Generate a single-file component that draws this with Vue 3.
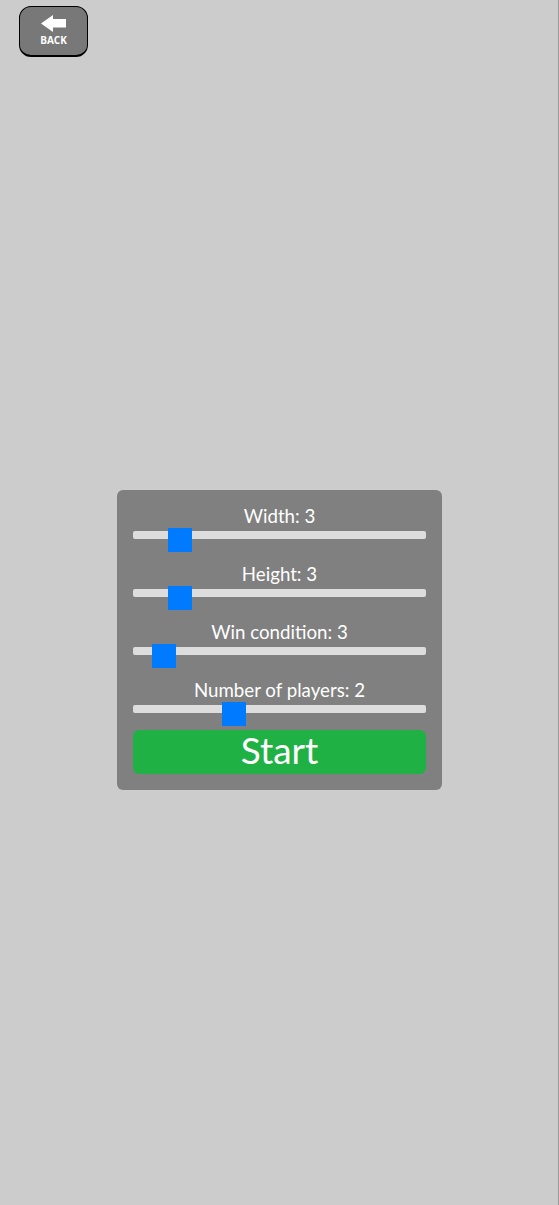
<script setup>
import { ref } from 'vue';

const width = ref(3);
const height = ref(3);
const winCondition = ref(3);
const players = ref(2);
</script>

<template>
    <div class="page">
        <header class="top">
            <button class="back-btn" type="button">
                <svg class="back-icon" viewBox="0 0 25 17" width="25" height="17">
                    <path d="M0 8.5 L12 0 V4 H25 V12.5 H12 V17 Z" fill="#fff" />
                </svg>
                <span class="back-text">BACK</span>
            </button>
        </header>
        <main class="main">
            <div class="panel">
                <div class="field">
                    <label class="label">Width: {{ width }}</label>
                    <input v-model.number="width" class="slider" type="range" min="1" max="16" />
                </div>
                <div class="field">
                    <label class="label">Height: {{ height }}</label>
                    <input v-model.number="height" class="slider" type="range" min="1" max="16" />
                </div>
                <div class="field">
                    <label class="label">Win condition: {{ winCondition }}</label>
                    <input v-model.number="winCondition" class="slider" type="range" min="2" max="16" />
                </div>
                <div class="field">
                    <label class="label">Number of players: {{ players }}</label>
                    <input v-model.number="players" class="slider" type="range" min="1" max="4" />
                </div>
                <button class="start-btn" type="button">Start</button>
            </div>
        </main>
    </div>
</template>

<style>
html,
body {
    margin: 0;
    background: #cccccc;
}
</style>

<style scoped>
.page {
    display: flex;
    flex-direction: column;
    height: 1205px;
    background: #cccccc;
    box-shadow: inset -1px 0 0 #999999;
    font-family: Lato, "Open Sans", sans-serif;
    overflow: hidden;
}

.top {
    height: 75px;
    flex: none;
    padding: 6px 0 0 19px;
    box-sizing: border-box;
}

.back-btn {
    display: flex;
    flex-direction: column;
    align-items: center;
    width: 69px;
    height: 51px;
    padding: 8px 0 0;
    box-sizing: border-box;
    background: #787878;
    border: 1px solid #000;
    border-bottom-width: 2px;
    border-radius: 12px;
    color: #fff;
    cursor: pointer;
}

.back-icon {
    display: block;
}

.back-text {
    margin-top: 2px;
    font-family: "Open Sans", sans-serif;
    font-size: 10px;
    line-height: 13px;
    font-weight: 700;
}

.main {
    flex: 1;
    display: flex;
    align-items: center;
    justify-content: center;
}

.panel {
    width: 325px;
    box-sizing: border-box;
    padding: 16px;
    background: #808080;
    border-radius: 6px;
}

.field {
    padding-bottom: 12px;
}

.field:nth-child(4) {
    padding-bottom: 4px;
}

.label {
    display: block;
    height: 22px;
    color: #fff;
    font-size: 18.7px;
    line-height: 20px;
    text-align: center;
}

.slider {
    display: block;
    appearance: none;
    -webkit-appearance: none;
    width: 100%;
    height: 8px;
    margin: 3px 0 13px;
    background: transparent;
    outline: none;
}

.slider::-webkit-slider-runnable-track {
    height: 8px;
    background: #dddddd;
    border-radius: 2px;
}

.slider::-webkit-slider-thumb {
    -webkit-appearance: none;
    width: 24px;
    height: 24px;
    margin-top: -3px;
    margin-left: -0.5px;
    background: #007bff;
    border: none;
    border-radius: 0;
    cursor: pointer;
}

.start-btn {
    display: block;
    width: 100%;
    height: 44px;
    padding: 0 0 5px;
    background: #20b144;
    border: none;
    border-radius: 6px;
    color: #fff;
    font-family: inherit;
    font-size: 37px;
    line-height: 40px;
    cursor: pointer;
}
</style>
